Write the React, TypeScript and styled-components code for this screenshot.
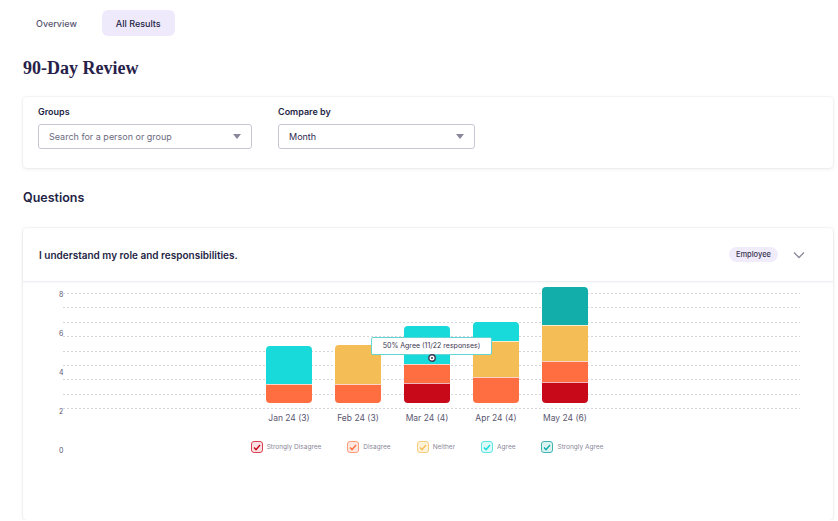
import React from "react";
import styled, { createGlobalStyle } from "styled-components";

const GlobalStyle = createGlobalStyle`
  html, body { margin: 0; padding: 0; background: #fff; }
  body { font-family: Inter, "Liberation Sans", sans-serif; color: #241f45; }
  * { box-sizing: border-box; }
`;

const palette = {
  sd: "#c8091a",
  d: "#ff6e40",
  n: "#f5bd55",
  a: "#19dada",
  sa: "#12aeaa",
};

type Key = keyof typeof palette;

const months: { label: string; segments: { key: Key; h: number }[] }[] = [
  { label: "Jan 24 (3)", segments: [{ key: "a", h: 38 }, { key: "d", h: 19 }] },
  { label: "Feb 24 (3)", segments: [{ key: "n", h: 39 }, { key: "d", h: 19 }] },
  { label: "Mar 24 (4)", segments: [{ key: "a", h: 38 }, { key: "d", h: 19 }, { key: "sd", h: 20 }] },
  { label: "Apr 24 (4)", segments: [{ key: "a", h: 19 }, { key: "n", h: 36 }, { key: "d", h: 26 }] },
  { label: "May 24 (6)", segments: [{ key: "sa", h: 38 }, { key: "n", h: 36 }, { key: "d", h: 21 }, { key: "sd", h: 21 }] },
];

const legend: { key: Key; label: string; tint: string; edge: string }[] = [
  { key: "sd", label: "Strongly Disagree", tint: "#fbe1e3", edge: "#d9414f" },
  { key: "d", label: "Disagree", tint: "#ffe8df", edge: "#ff9a7a" },
  { key: "n", label: "Neither", tint: "#fff3dc", edge: "#f7cc7c" },
  { key: "a", label: "Agree", tint: "#dcfafa", edge: "#5fe3e3" },
  { key: "sa", label: "Strongly Agree", tint: "#ddf3f2", edge: "#3fb4b1" },
];

export default function App() {
  return (
    <>
      <GlobalStyle />
      <Page>
        <Tabs>
          <Tab>Overview</Tab>
          <Tab $active>All Results</Tab>
        </Tabs>
        <Title>90-Day Review</Title>

        <FilterCard>
          <Field>
            <FieldLabel>Groups</FieldLabel>
            <Select $width={214}>
              <SelectText $placeholder>Search for a person or group</SelectText>
              <Caret />
            </Select>
          </Field>
          <Field>
            <FieldLabel>Compare by</FieldLabel>
            <Select $width={197}>
              <SelectText>Month</SelectText>
              <Caret />
            </Select>
          </Field>
        </FilterCard>

        <SectionTitle>Questions</SectionTitle>

        <QuestionCard>
          <QuestionHeader>
            <QuestionText>I understand my role and responsibilities.</QuestionText>
            <HeaderRight>
              <Badge>Employee</Badge>
              <svg width="12" height="8" viewBox="0 0 12 8">
                <path d="M1 1.5l5 5 5-5" fill="none" stroke="#8b879a" strokeWidth="1.3" />
              </svg>
            </HeaderRight>
          </QuestionHeader>

          <ChartBody>
            <YAxis>
              {[8, 6, 4, 2, 0].map((v) => (
                <YLabel key={v}>{v}</YLabel>
              ))}
            </YAxis>
            <Plot>
              <StackCell>
                <GridLines>
                  {Array.from({ length: 9 }).map((_, i) => (
                    <GridLine key={i} />
                  ))}
                </GridLines>
                <BarsRow>
                  {months.map((m) => (
                    <Bar key={m.label}>
                      {m.segments.map((s, i) => (
                        <Segment key={i} $color={palette[s.key]} style={{ height: s.h }} />
                      ))}
                    </Bar>
                  ))}
                </BarsRow>
                <Tooltip>50% Agree (11/22 responses)</Tooltip>
                <Cursor>
                  <svg width="8" height="8" viewBox="0 0 8 8">
                    <circle cx="4" cy="4" r="3.2" fill="#fff" stroke="#3a3550" strokeWidth="1.4" />
                    <circle cx="4" cy="4" r="1" fill="#3a3550" />
                  </svg>
                </Cursor>
              </StackCell>
              <XLabels>
                {months.map((m) => (
                  <XLabel key={m.label}>{m.label}</XLabel>
                ))}
              </XLabels>
              <Legend>
                {legend.map((l) => (
                  <LegendItem key={l.key}>
                    <Check $tint={l.tint} $edge={l.edge}>
                      <svg width="8" height="7" viewBox="0 0 8 7">
                        <path d="M1 3.6l2 2L7 1" fill="none" stroke={palette[l.key]} strokeWidth="1.4" />
                      </svg>
                    </Check>
                    <LegendLabel>{l.label}</LegendLabel>
                  </LegendItem>
                ))}
              </Legend>
            </Plot>
          </ChartBody>
        </QuestionCard>
      </Page>
    </>
  );
}

const Page = styled.div`
  width: 838px;
  padding: 10px 5px 0 23px;
`;

const Tabs = styled.div`
  display: flex;
  gap: 11px;
  margin-left: -1px;
`;

const Tab = styled.div<{ $active?: boolean }>`
  height: 26px;
  padding: 0 14px;
  display: flex;
  align-items: center;
  border-radius: 6px;
  font-size: 9px;
  font-weight: 500;
  color: ${(p) => (p.$active ? "#241f45" : "#5a5670")};
  background: ${(p) => (p.$active ? "#efe9fc" : "transparent")};
`;

const Title = styled.h1`
  margin: 22px 0 0;
  font-family: "Liberation Serif", "DejaVu Serif", serif;
  font-weight: 700;
  font-size: 18px;
  line-height: 20px;
  color: #27214a;
`;

const Card = styled.div`
  background: #fff;
  border-radius: 4px;
  box-shadow: 0 0 0 1px rgba(30, 20, 70, 0.03), 0 1px 4px rgba(30, 20, 70, 0.08);
`;

const FilterCard = styled(Card)`
  margin-top: 19px;
  height: 71px;
  padding: 9px 15px 0;
  display: flex;
  gap: 26px;
`;

const Field = styled.div`
  display: flex;
  flex-direction: column;
  gap: 7px;
`;

const FieldLabel = styled.div`
  font-size: 9px;
  font-weight: 600;
  line-height: 11px;
  color: #241f45;
`;

const Select = styled.div<{ $width: number }>`
  width: ${(p) => p.$width}px;
  height: 25px;
  border: 1px solid #c9c6d3;
  border-radius: 3px;
  padding: 0 10px;
  display: flex;
  align-items: center;
  justify-content: space-between;
`;

const SelectText = styled.span<{ $placeholder?: boolean }>`
  font-size: 9px;
  color: ${(p) => (p.$placeholder ? "#6d6a80" : "#2d2850")};
`;

const Caret = styled.span`
  width: 0;
  height: 0;
  border-left: 4.5px solid transparent;
  border-right: 4.5px solid transparent;
  border-top: 5px solid #8b879a;
`;

const SectionTitle = styled.h2`
  margin: 22px 0 0;
  font-size: 12.5px;
  font-weight: 600;
  line-height: 16px;
  color: #241f45;
`;

const QuestionCard = styled(Card)`
  margin-top: 22px;
`;

const QuestionHeader = styled.div`
  height: 54px;
  padding: 0 28px 0 16px;
  display: flex;
  align-items: center;
  justify-content: space-between;
  border-bottom: 1px solid #eeedf2;
  box-shadow: 0 1px 2px rgba(30, 20, 70, 0.04);
`;

const QuestionText = styled.div`
  font-size: 10px;
  font-weight: 600;
  color: #241f45;
`;

const HeaderRight = styled.div`
  display: flex;
  align-items: center;
  gap: 15px;
`;

const Badge = styled.span`
  height: 15px;
  padding: 0 7px;
  border-radius: 8px;
  background: #f1ecfb;
  font-size: 7.5px;
  font-weight: 500;
  line-height: 15px;
  color: #3a3550;
`;

const ChartBody = styled.div`
  display: grid;
  grid-template-columns: 40px 1fr;
  padding: 5px 42px 64px 0;
`;

const YAxis = styled.div`
  display: flex;
  flex-direction: column;
  gap: 29px;
  padding: 3px 0 0 36px;
`;

const YLabel = styled.div`
  height: 10px;
  line-height: 10px;
  font-size: 7px;
  color: #5a5670;
`;

const Plot = styled.div`
  display: flex;
  flex-direction: column;
`;

const StackCell = styled.div`
  position: relative;
  display: grid;
  height: 122px;
  & > * {
    grid-area: 1 / 1;
  }
`;

const GridLines = styled.div`
  display: flex;
  flex-direction: column;
  justify-content: space-between;
  padding-top: 6px;
  margin-right: -9px;
`;

const GridLine = styled.div`
  height: 1px;
  background-image: linear-gradient(to right, #d6d4dd 50%, transparent 50%);
  background-size: 4px 1px;
  background-repeat: repeat-x;
`;

const BarsRow = styled.div`
  display: flex;
  justify-content: center;
  align-items: flex-end;
  gap: 23px;
  padding-bottom: 6px;
`;

const Bar = styled.div`
  width: 46px;
  display: flex;
  flex-direction: column;
  border-radius: 4px;
  overflow: hidden;
`;

const Segment = styled.div<{ $color: string }>`
  background: ${(p) => p.$color};
  & + & {
    border-top: 1px solid rgba(255, 255, 255, 0.7);
  }
`;

const Tooltip = styled.div`
  position: absolute;
  left: 308px;
  top: 50px;
  width: 121px;
  height: 18px;
  border: 1px solid #63d6d3;
  border-radius: 2px;
  background: #fff;
  font-size: 7px;
  line-height: 16px;
  text-align: center;
  color: #3a3550;
`;

const Cursor = styled.div`
  position: absolute;
  left: 365px;
  top: 67px;
  width: 8px;
  height: 8px;
  display: flex;
`;

const XLabels = styled.div`
  display: flex;
  justify-content: center;
  gap: 23px;
  margin-top: 3px;
`;

const XLabel = styled.div`
  width: 46px;
  display: flex;
  justify-content: center;
  white-space: nowrap;
  font-size: 8.5px;
  line-height: 12px;
  color: #5a5670;
`;

const Legend = styled.div`
  display: flex;
  justify-content: center;
  gap: 26px;
  margin-top: 16px;
  height: 14px;
  align-items: center;
`;

const LegendItem = styled.div`
  display: flex;
  align-items: center;
  gap: 4px;
`;

const Check = styled.span<{ $tint: string; $edge: string }>`
  width: 12px;
  height: 12px;
  border-radius: 3px;
  border: 1px solid ${(p) => p.$edge};
  background: ${(p) => p.$tint};
  display: flex;
  align-items: center;
  justify-content: center;
`;

const LegendLabel = styled.span`
  font-size: 6.5px;
  color: #8a8799;
`;
